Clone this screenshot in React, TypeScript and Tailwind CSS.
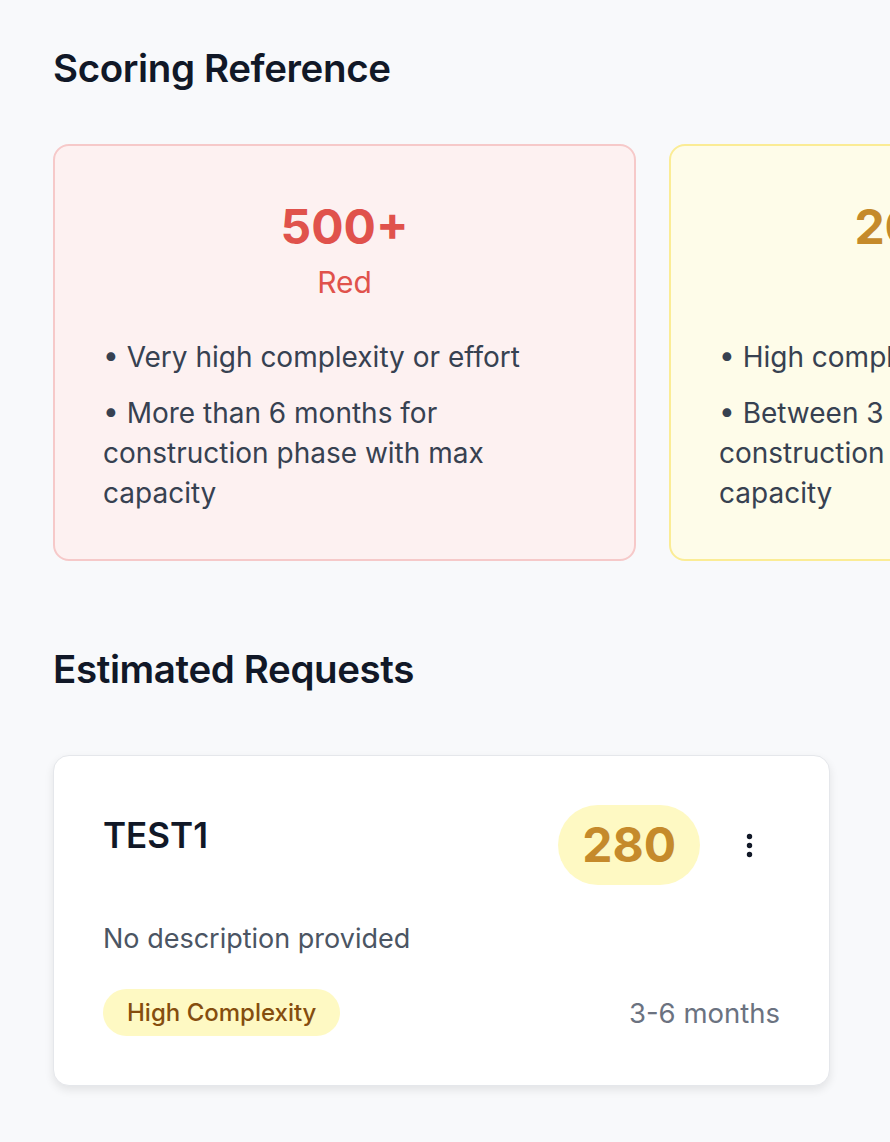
import { EllipsisVertical } from 'lucide-react';

const tiers = [
  {
    score: '500+',
    label: 'Red',
    points: ['Very high complexity or effort', 'More than 6 months for construction phase with max capacity'],
    box: 'bg-[#fdf1f1] border-[#f6c9c9]',
    text: 'text-[#e0524c]',
  },
  {
    score: '200-499',
    label: 'Yellow',
    points: ['High complexity or effort', 'Between 3 & 6 months for construction phase with max capacity'],
    box: 'bg-[#fefce9] border-[#fbec95]',
    text: 'text-[#c58a2b]',
  },
];

export default function App() {
  return (
    <div className="min-h-screen w-full overflow-hidden bg-[#f8f9fb] px-[53px] pt-[44px] pb-10 font-['Inter',sans-serif]">
      <h2 className="text-[38.5px] leading-[48px] font-semibold tracking-[-0.01em] text-[#111827]">Scoring Reference</h2>

      <div className="mt-[52px] flex gap-[33px]">
        {tiers.map(t => (
          <div key={t.label} className={`w-[583px] shrink-0 rounded-[16px] border-2 px-[48px] pt-[53px] pb-[46px] ${t.box}`}>
            <div className="text-center">
              <div className={`text-[48px] leading-[56px] font-bold ${t.text}`}>{t.score}</div>
              <div className={`mt-[7px] text-[30px] leading-[40px] ${t.text}`}>{t.label}</div>
            </div>
            <ul className="mt-[35px] flex flex-col gap-[16px] text-[28px] leading-[40px] text-[#374151]">
              {t.points.map(p => (
                <li key={p}>• {p}</li>
              ))}
            </ul>
          </div>
        ))}
      </div>

      <h2 className="mt-[84px] text-[38.5px] leading-[48px] font-semibold tracking-[-0.01em] text-[#111827]">Estimated Requests</h2>

      <div className="mt-[62px] w-[777px] rounded-[16px] border border-gray-200 bg-white p-[49px] shadow-[0_4px_10px_rgba(0,0,0,0.09)]">
        <div className="flex items-start justify-between">
          <div className="pt-[6px] text-[35px] leading-[48px] font-semibold text-[#111827]">TEST1</div>
          <div className="flex items-center gap-[18px]">
            <div className="rounded-full bg-[#fef9c3] px-[24px] py-[16px] text-[48px] leading-[48px] font-bold text-[#c58a2b]">280</div>
            <button className="flex h-[62px] w-[62px] items-center justify-center">
              <EllipsisVertical size={31} strokeWidth={2.2} className="text-[#111827]" />
            </button>
          </div>
        </div>
        <p className="mt-[36px] text-[27px] leading-[36px] text-[#4b5563]">No description provided</p>
        <div className="mt-[32px] flex items-center justify-between">
          <span className="rounded-full bg-[#fef9c3] px-[24px] py-[7px] text-[24px] leading-[33px] font-medium text-[#854d0e]">High Complexity</span>
          <span className="text-[27.5px] leading-[36px] text-[#6b7280]">3-6 months</span>
        </div>
      </div>
    </div>
  );
}
